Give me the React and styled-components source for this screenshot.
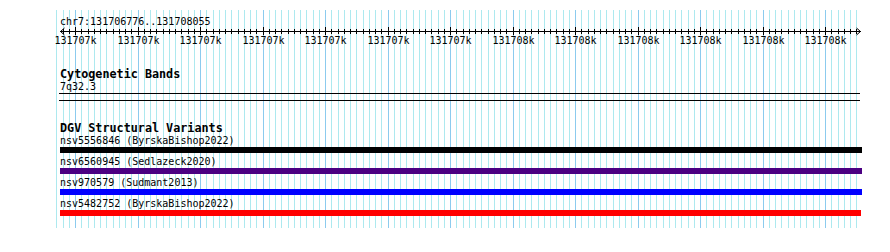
import React from "react";
import styled, { createGlobalStyle } from "styled-components";

const GlobalStyle = createGlobalStyle`
  html, body { margin: 0; padding: 0; background: #fff; }
  body { font-family: "DejaVu Sans Mono", "Liberation Mono", monospace; color: #000; }
`;

const MINOR = 6.25;
const GRID_START = 56.25;
const GRID_COUNT = 129;
const gridXs = Array.from({ length: GRID_COUNT }, (_, k) => ({
  x: Math.round(GRID_START + MINOR * k),
  major: (k - 3) % 10 === 0,
}));

const Page = styled.div`
  position: relative;
  width: 890px;
  height: 252px;
  overflow: hidden;
  display: flex;
  flex-direction: column;
  padding-top: 16px;
  box-sizing: border-box;
`;

const GridLayer = styled.div`
  position: absolute;
  top: 10px;
  height: 218px;
  left: 0;
  width: 890px;
  pointer-events: none;
  z-index: 0;
`;

const GridLine = styled.div`
  position: absolute;
  top: 0;
  bottom: 0;
  width: 1px;
  background: ${(p) => (p.$major ? "#8ccbee" : "#ade9ef")};
`;

const Content = styled.div`
  position: relative;
  z-index: 1;
  display: flex;
  flex-direction: column;
`;

const Location = styled.div`
  padding-left: 60px;
  font-size: 10px;
  line-height: 11px;
  height: 11px;
  white-space: pre;
`;

const RulerSvg = styled.svg`
  display: block;
  overflow: visible;
  font-family: "DejaVu Sans Mono", "Liberation Mono", monospace;
`;

const Track = styled.section`
  display: flex;
  flex-direction: column;
  padding-left: 60px;
  margin-top: ${(p) => p.$gap}px;
`;

const TrackTitle = styled.div`
  font-size: 11.75px;
  font-weight: bold;
  line-height: 14px;
  height: 14px;
  white-space: pre;
`;

const Label = styled.div`
  font-size: 10px;
  line-height: 11px;
  height: 11px;
  white-space: pre;
`;

const Band = styled.div`
  margin-top: 1px;
  margin-left: -1px;
  width: 801px;
  height: 6px;
  border-top: 1px solid #000;
  border-bottom: 1px solid #000;
`;

const Feature = styled.div`
  display: flex;
  flex-direction: column;
  & + & {
    margin-top: 3px;
  }
`;

const Bar = styled.div`
  margin-top: 1px;
  height: 6px;
  width: ${(p) => p.$width}px;
  background: ${(p) => p.$color};
`;

const features = [
  { id: "nsv5556846", study: "ByrskaBishop2022", color: "#000000", width: 802 },
  { id: "nsv6560945", study: "Sedlazeck2020", color: "#4b0082", width: 802 },
  { id: "nsv970579", study: "Sudmant2013", color: "#0000ff", width: 802 },
  { id: "nsv5482752", study: "ByrskaBishop2022", color: "#ff0000", width: 801 },
];

function Ruler() {
  const ticks = gridXs.slice(1);
  const majors = gridXs.filter((g) => g.major);
  return (
    <RulerSvg width="890" height="20" viewBox="0 0 890 20">
      <g stroke="#000" strokeWidth="1" shapeRendering="crispEdges">
        <line x1="60" y1="4.5" x2="861" y2="4.5" />
        {ticks.map((t) => (
          <line
            key={t.x}
            x1={t.x + 0.5}
            x2={t.x + 0.5}
            y1={t.major ? 0 : 2}
            y2={t.major ? 8 : 7}
          />
        ))}
      </g>
      <g stroke="#000" strokeWidth="1" fill="none">
        <polyline points="64.5,1 60.5,4.5 64.5,8" />
        <polyline points="856.5,1 860.5,4.5 856.5,8" />
      </g>
      <g fontSize="10" textAnchor="middle" fill="#000">
        {majors.map((m, i) => (
          <text key={m.x} x={m.x + 0.5} y="17">
            {i < 7 ? "131707k" : "131708k"}
          </text>
        ))}
      </g>
    </RulerSvg>
  );
}

export default function App() {
  return (
    <>
      <GlobalStyle />
      <Page>
        <GridLayer>
          {gridXs.map((g) => (
            <GridLine key={g.x} $major={g.major} style={{ left: g.x }} />
          ))}
        </GridLayer>
        <Content>
          <Location>chr7:131706776..131708055</Location>
          <Ruler />
          <Track $gap={20}>
            <TrackTitle>Cytogenetic Bands</TrackTitle>
            <Label>7q32.3</Label>
            <Band />
          </Track>
          <Track $gap={20}>
            <TrackTitle>DGV Structural Variants</TrackTitle>
            {features.map((f) => (
              <Feature key={f.id}>
                <Label>{`${f.id} (${f.study})`}</Label>
                <Bar $color={f.color} $width={f.width} />
              </Feature>
            ))}
          </Track>
        </Content>
      </Page>
    </>
  );
}
